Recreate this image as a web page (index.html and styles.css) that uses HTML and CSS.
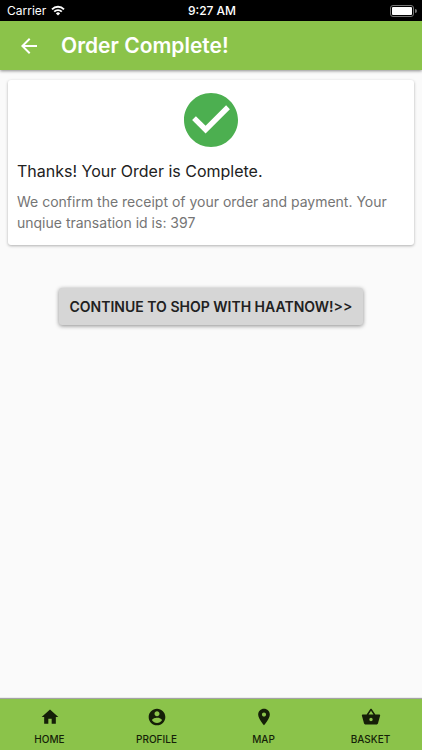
FILE: index.html
```
<!DOCTYPE html>
<html lang="en">
<head>
    <meta charset="UTF-8">
    <meta name="viewport" content="width=device-width, initial-scale=1.0">
    <title>Order Complete!</title>
    <link rel="stylesheet" href="styles.css">
</head>
<body>
    <div class="status-bar">
        <div class="carrier">
            <span>Carrier</span>
            <svg class="wifi-icon" viewBox="0 0 14 11" aria-hidden="true">
                <path d="M7 10.6 4.9 8.4a3 3 0 0 1 4.2 0z" fill="#fff"/>
                <path d="M3.2 6.7a5.4 5.4 0 0 1 7.6 0M1 4.3a8.5 8.5 0 0 1 12 0" fill="none" stroke="#fff" stroke-width="1.9"/>
            </svg>
        </div>
        <div class="clock">9:27 AM</div>
        <div class="battery">
            <svg class="battery-icon" viewBox="0 0 27 12" aria-hidden="true">
                <rect x="0.5" y="0.5" width="23" height="11" rx="2.5" fill="none" stroke="#777"/>
                <rect x="2" y="2" width="20" height="8" rx="1" fill="#fff"/>
                <path d="M25 4v4a2 2 0 0 0 0-4z" fill="#777"/>
            </svg>
        </div>
    </div>

    <header class="app-bar">
        <button type="button" class="back-button" aria-label="Back">
            <svg viewBox="0 0 24 24"><path d="M20 11H7.83l5.59-5.59L12 4l-8 8 8 8 1.41-1.41L7.83 13H20v-2z"/></svg>
        </button>
        <h1>Order Complete!</h1>
    </header>

    <main class="content">
        <section class="card">
            <svg class="check-icon" viewBox="2 2 20 20" aria-hidden="true">
                <path d="M12 2C6.48 2 2 6.48 2 12s4.48 10 10 10 10-4.48 10-10S17.52 2 12 2zm-2 15l-5-5 1.41-1.41L10 14.17l7.59-7.59L19 8l-9 9z"/>
            </svg>
            <h2>Thanks! Your Order is Complete.</h2>
            <p>We confirm the receipt of your order and payment. Your unqiue transation id is: 397</p>
        </section>
        <button type="button" class="continue-button">CONTINUE TO SHOP WITH HAATNOW!&gt;&gt;</button>
    </main>

    <nav class="bottom-nav">
        <a href="#home">
            <svg viewBox="0 0 24 24"><path d="M10 20v-6h4v6h5v-8h3L12 3 2 12h3v8z"/></svg>
            <span>HOME</span>
        </a>
        <a href="#profile">
            <svg viewBox="0 0 24 24"><path d="M12 2C6.48 2 2 6.48 2 12s4.48 10 10 10 10-4.48 10-10S17.52 2 12 2zm0 3c1.66 0 3 1.34 3 3s-1.34 3-3 3-3-1.34-3-3 1.34-3 3-3zm0 14.2c-2.5 0-4.71-1.28-6-3.22.03-1.99 4-3.08 6-3.08 1.99 0 5.97 1.09 6 3.08-1.29 1.94-3.5 3.22-6 3.22z"/></svg>
            <span>PROFILE</span>
        </a>
        <a href="#map">
            <svg viewBox="0 0 24 24"><path d="M12 2C8.13 2 5 5.13 5 9c0 5.25 7 13 7 13s7-7.75 7-13c0-3.87-3.13-7-7-7zm0 9.5c-1.38 0-2.5-1.12-2.5-2.5s1.12-2.5 2.5-2.5 2.5 1.12 2.5 2.5-1.12 2.5-2.5 2.5z"/></svg>
            <span>MAP</span>
        </a>
        <a href="#basket">
            <svg viewBox="0 0 24 24"><path d="M17.21 9l-4.38-6.56c-.19-.28-.51-.42-.83-.42-.32 0-.64.14-.83.43L6.79 9H2c-.55 0-1 .45-1 1 0 .09.01.18.04.27l2.54 9.27c.23.84 1 1.46 1.92 1.46h13c.92 0 1.69-.62 1.93-1.46l2.54-9.27L23 10c0-.55-.45-1-1-1h-4.79zM9 9l3-4.4L15 9H9zm3 8c-1.1 0-2-.9-2-2s.9-2 2-2 2 .9 2 2-.9 2-2 2z"/></svg>
            <span>BASKET</span>
        </a>
    </nav>
</body>
</html>
```
FILE: styles.css
```
* {
    margin: 0;
    padding: 0;
    box-sizing: border-box;
}

body {
    display: flex;
    flex-direction: column;
    min-height: 100vh;
    font-family: Inter, "Liberation Sans", sans-serif;
    background-color: #fafafa;
    color: #212121;
}

button {
    border: none;
    font-family: inherit;
    cursor: pointer;
}

.status-bar {
    display: grid;
    grid-template-columns: 1fr auto 1fr;
    align-items: center;
    height: 21px;
    padding: 0 5px 0 7px;
    background-color: #000;
    color: #fff;
    font-size: 12px;
}

.carrier {
    display: flex;
    align-items: center;
    gap: 5px;
}

.wifi-icon {
    width: 14px;
    height: 11px;
}

.clock {
    font-weight: 500;
}

.battery {
    display: flex;
    justify-content: flex-end;
}

.battery-icon {
    width: 27px;
    height: 12px;
}

.app-bar {
    display: flex;
    align-items: center;
    gap: 20px;
    height: 49px;
    padding: 0 17px;
    background-color: #8bc34a;
    box-shadow: 0 1px 3px rgba(0,0,0,0.45);
    color: #fff;
}

.app-bar h1 {
    font-size: 21px;
    font-weight: 600;
}

.back-button {
    width: 24px;
    height: 24px;
    background: none;
}

.back-button svg {
    display: block;
    fill: #fff;
}

.content {
    flex: 1;
    display: flex;
    flex-direction: column;
    align-items: center;
    gap: 43px;
    padding: 10px 8px;
}

.card {
    width: 100%;
    padding: 13px 9px 12px;
    background-color: #fff;
    border-radius: 3px;
    box-shadow: 0 1px 3px rgba(0,0,0,0.3);
}

.check-icon {
    display: block;
    width: 54px;
    height: 54px;
    margin: 0 auto 14px;
    fill: #4caf50;
}

.card h2 {
    margin-bottom: 10px;
    font-size: 16px;
    font-weight: 400;
    line-height: 20px;
}

.card p {
    font-size: 14px;
    line-height: 21px;
    color: #757575;
}

.continue-button {
    height: 37px;
    padding: 0 11px;
    background-color: #d6d6d6;
    border-radius: 3px;
    box-shadow: 0 1px 4px rgba(0,0,0,0.45);
    color: #212121;
    font-size: 14px;
    font-weight: 600;
}

.bottom-nav {
    display: grid;
    grid-template-columns: repeat(4, 1fr);
    gap: 8px;
    height: 51px;
    padding: 8px 2px 4px 0;
    background-color: #8bc34a;
    box-shadow: 0 -1px 1px rgba(0,0,0,0.35);
}

.bottom-nav a {
    display: flex;
    flex-direction: column;
    align-items: center;
    gap: 6px;
    color: #151f08;
    font-size: 10px;
    font-weight: 500;
    line-height: 12px;
    text-decoration: none;
}

.bottom-nav svg {
    width: 20px;
    height: 20px;
    fill: #151f08;
}
```
